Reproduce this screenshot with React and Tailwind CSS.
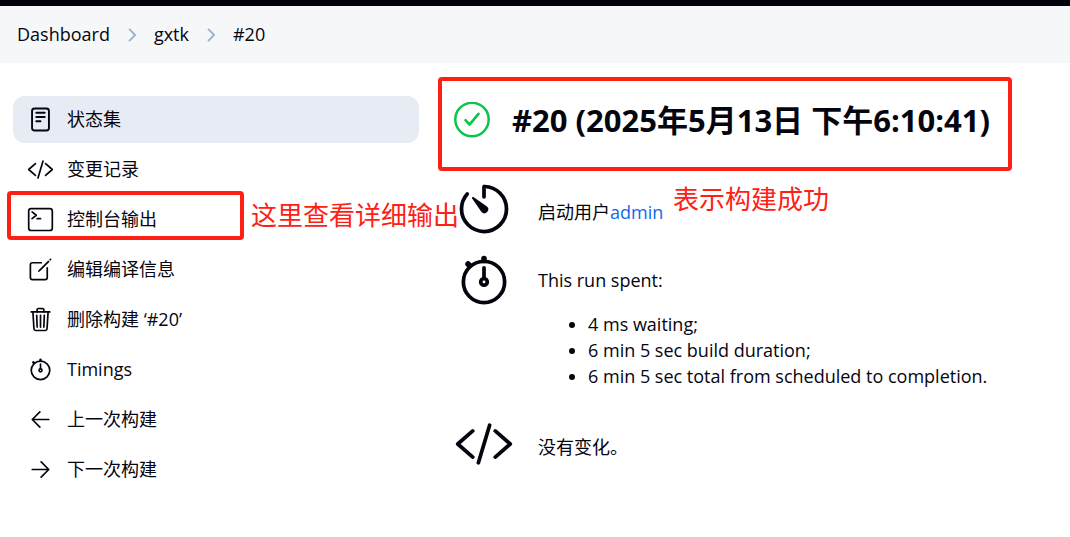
// src/App.jsx

import React from 'react';

// All line icons share a 512 grid
function Icon({ className, strokeWidth = 32, children }) {
  return (
    <svg
      viewBox="0 0 512 512"
      className={className}
      fill="none"
      stroke="currentColor"
      strokeWidth={strokeWidth}
      strokeLinecap="round"
      strokeLinejoin="round"
      aria-hidden="true"
    >
      {children}
    </svg>
  );
}

const icons = {
  document: (
    <>
      <rect x="96" y="48" width="320" height="416" rx="48" strokeWidth="36" />
      <path strokeWidth="36" d="M176 128h160M176 208h160M176 288h80" />
    </>
  ),
  code: <path d="M160 368L32 256l128-112M352 368l128-112-128-112M304 96l-96 320" />,
  terminal: (
    <>
      <rect x="32" y="48" width="448" height="416" rx="48" />
      <path d="M96 112l80 64-80 64M192 240h64" />
    </>
  ),
  edit: (
    <>
      <path d="M384 224v184a40 40 0 01-40 40H104a40 40 0 01-40-40V168a40 40 0 0140-40h167.48" />
      <path
        fill="currentColor"
        stroke="none"
        d="M459.94 53.25a16.06 16.06 0 00-23.22-.56L424.35 65a8 8 0 000 11.31l11.34 11.32a8 8 0 0011.34 0l12.06-12c6.1-6.09 6.67-16.01.85-22.38zM399.34 90L218.82 270.2a9 9 0 00-2.31 3.93L208.16 299a3.91 3.91 0 004.86 4.86l24.85-8.35a9 9 0 003.93-2.31L422 112.66a9 9 0 000-12.66l-9.95-10a9 9 0 00-12.71 0z"
      />
    </>
  ),
  trash: (
    <>
      <path d="M112 112l20 320c.95 18.49 14.4 32 32 32h184c17.67 0 30.87-13.51 32-32l20-320M80 112h352" />
      <path d="M192 112V72a23.93 23.93 0 0124-24h80a23.93 23.93 0 0124 24v40M256 176v224M184 176l8 224M328 176l-8 224" />
    </>
  ),
  stopwatch: (
    <>
      <circle cx="256" cy="272" r="176" />
      <circle cx="256" cy="272" r="28" />
      <path d="M256 232v-80" />
      <path strokeWidth="48" d="M256 88V72M132 132l-12-12" />
    </>
  ),
  timer: (
    <>
      <path d="M112.91 128A191.85 191.85 0 0064 254c-1.18 106.35 85.65 193.8 192 194 106.2.2 192-85.83 192-192 0-104.54-83.55-189.61-187.5-192a4.36 4.36 0 00-4.5 4.37V152" />
      <path
        fill="currentColor"
        stroke="none"
        d="M233.38 278.63l-79-113a8.13 8.13 0 0111.32-11.32l113 79a32.5 32.5 0 01-37.25 53.26 33.21 33.21 0 01-8.07-7.94z"
      />
    </>
  ),
  back: <path d="M244 400L100 256l144-144M120 256h292" />,
  forward: <path d="M268 112l144 144-144 144M392 256H100" />,
};

const tasks = [
  { icon: 'document', label: '状态集', active: true },
  { icon: 'code', label: '变更记录' },
  { icon: 'terminal', label: '控制台输出', note: '这里查看详细输出' },
  { icon: 'edit', label: '编辑编译信息' },
  { icon: 'trash', label: '删除构建 ‘#20’' },
  { icon: 'stopwatch', label: 'Timings' },
  { icon: 'back', label: '上一次构建' },
  { icon: 'forward', label: '下一次构建' },
];

const crumbs = ['Dashboard', 'gxtk', '#20'];

function Breadcrumbs() {
  return (
    <header className="border-t-6 border-[#02000c] bg-[#f5f7f9]">
      <nav className="flex h-[57px] items-center gap-4 px-[17px]" aria-label="Breadcrumb">
        {crumbs.map((crumb, index) => (
          <React.Fragment key={crumb}>
            {index > 0 && (
              <Icon className="-mx-1 size-5 text-[#9ab3cf]" strokeWidth={48}>
                <path d="M192 112l144 144-144 144" />
              </Icon>
            )}
            <a href="#" className="pb-0.5">{crumb}</a>
          </React.Fragment>
        ))}
      </nav>
    </header>
  );
}

function Sidebar() {
  return (
    <nav className="flex w-[406px] shrink-0 flex-col gap-[3px]" aria-label="Tasks">
      {tasks.map((task) => (
        <a
          key={task.label}
          href="#"
          className={`relative flex h-[47px] items-center gap-[13px] rounded-xl pl-[14px] ${
            task.active ? 'bg-[#e7ebf3]' : ''
          }`}
        >
          <Icon className="size-[27px]">{icons[task.icon]}</Icon>
          <span className="pb-0.5">{task.label}</span>
          {task.note && (
            <>
              <span className="absolute -top-[5px] -left-[6px] h-[49px] w-[237px] rounded-sm border-4 border-[#ff2015]" />
              <span className="absolute -top-px left-[238px] z-10 text-[26px] leading-10 whitespace-nowrap text-[#ff2015]">
                {task.note}
              </span>
            </>
          )}
        </a>
      ))}
    </nav>
  );
}

function SummaryRow({ icon, children }) {
  return (
    <div className="flex gap-6">
      <Icon className="size-[60px] shrink-0">{icons[icon]}</Icon>
      <div className="pt-5">{children}</div>
    </div>
  );
}

function BuildSummary() {
  return (
    <main className="min-w-0 flex-1">
      <div className="relative flex h-[47px] items-center gap-[22px]">
        <svg viewBox="0 0 36 36" className="size-9 shrink-0 text-[#0bc44c]" fill="none" stroke="currentColor" strokeLinecap="round" strokeLinejoin="round" role="img" aria-label="Success">
          <circle cx="18" cy="17.5" r="16.7" strokeWidth="2.5" />
          <path d="M11.5 18.2l4 4.4 9-10.8" strokeWidth="2.6" />
        </svg>
        <h1 className="text-[31px] font-bold whitespace-nowrap">#20 (2025年5月13日 下午6:10:41)</h1>
        <span className="absolute -top-[19px] -left-4 h-[94px] w-[574px] rounded-sm border-4 border-[#ff2015]" />
      </div>

      <div className="mt-9 flex flex-col gap-[11px]">
        <SummaryRow icon="timer">
          <p className="relative">
            启动用户
            <a href="#" className="text-[#0b6aef]">admin</a>
            <span className="absolute -top-5 left-[135px] text-[26px] leading-10 whitespace-nowrap text-[#ff2015]">
              表示构建成功
            </span>
          </p>
        </SummaryRow>
        <SummaryRow icon="stopwatch">
          <p className="leading-5">This run spent:</p>
          <ul className="mt-[21px] mb-[14px] list-disc pl-[50px]">
            <li>4 ms waiting;</li>
            <li>6 min 5 sec build duration;</li>
            <li>6 min 5 sec total from scheduled to completion.</li>
          </ul>
        </SummaryRow>
        <SummaryRow icon="code">
          <p>没有变化。</p>
        </SummaryRow>
      </div>
    </main>
  );
}

function App() {
  return (
    <div className="min-h-screen bg-white font-['Open_Sans','Noto_Sans_CJK_SC',sans-serif] text-[18px] leading-[26px] text-[#05050f]">
      <Breadcrumbs />
      <div className="flex gap-[35px] pt-[33px] pl-[13px]">
        <Sidebar />
        <BuildSummary />
      </div>
    </div>
  );
}

export default App;
